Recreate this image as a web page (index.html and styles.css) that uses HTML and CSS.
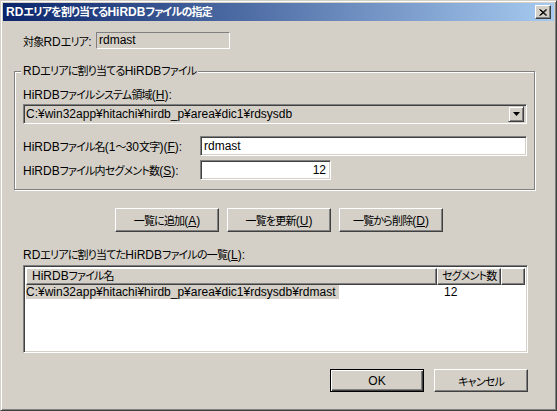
FILE: index.html
```
<!DOCTYPE html>
<html lang="ja">
<head>
<meta charset="utf-8">
<title>RDエリアを割り当てるHiRDBファイルの指定</title>
<link rel="stylesheet" href="styles.css">
</head>
<body>
<div class="window">
  <div class="titlebar">
    <span class="title">RD<span class="j">エリアを割り当てる</span>HiRDB<span class="j">ファイルの指定</span></span>
    <span class="close"><svg width="8" height="7" viewBox="0 0 8 7"><path d="M0.5 0.5 L7 6.5 M1.5 0.5 L8 6.5 M7 0.5 L0.5 6.5 M8 0.5 L1.5 6.5" stroke="#000" stroke-width="1" fill="none"/></svg></span>
  </div>
  <div class="body">
    <div class="target">
      <span class="tlabel"><span class="j">対象</span>RD<span class="j">エリア</span>:</span>
      <span class="static">rdmast</span>
    </div>
    <div class="group">
      <span class="legend">RD<span class="j">エリアに割り当てる</span>HiRDB<span class="j">ファイル</span></span>
      <div class="glabel">HiRDB<span class="j">ファイルシステム領域</span>(<u>H</u>):</div>
      <div class="combo">
        <span class="combo-text">C:¥win32app¥hitachi¥hirdb_p¥area¥dic1¥rdsysdb</span>
        <span class="combo-btn"><svg width="7" height="4" viewBox="0 0 7 4"><path d="M0 0 H7 L3.5 4 Z" fill="#000"/></svg></span>
      </div>
      <div class="field-row first">
        <span class="flabel">HiRDB<span class="j">ファイル名</span>(1<span class="j">〜</span>30<span class="j">文字</span>)(<u>F</u>):</span>
        <span class="edit name">rdmast</span>
      </div>
      <div class="field-row">
        <span class="flabel">HiRDB<span class="j">ファイル内セグメント数</span>(<u>S</u>):</span>
        <span class="edit num">12</span>
      </div>
    </div>
    <div class="btnrow">
      <button class="btn"><span class="j">一覧に追加</span>(<u>A</u>)</button>
      <button class="btn"><span class="j">一覧を更新</span>(<u>U</u>)</button>
      <button class="btn"><span class="j">一覧から削除</span>(<u>D</u>)</button>
    </div>
    <div class="list-label">RD<span class="j">エリアに割り当てた</span>HiRDB<span class="j">ファイルの一覧</span>(<u>L</u>):</div>
    <div class="list">
      <div class="lhead">
        <span class="hc c1">HiRDB<span class="j">ファイル名</span></span>
        <span class="hc c2"><span class="j">セグメント数</span></span>
        <span class="hc c3"></span>
      </div>
      <div class="lrow">
        <span class="rc1"><span class="sel">C:¥win32app¥hitachi¥hirdb_p¥area¥dic1¥rdsysdb¥rdmast</span></span>
        <span class="rc2">12</span>
      </div>
    </div>
    <div class="footer">
      <button class="btn dlg default">OK</button>
      <button class="btn dlg"><span class="j">キャンセル</span></button>
    </div>
  </div>
</div>
</body>
</html>
```

FILE: styles.css
```
* { box-sizing: border-box; }

body {
  margin: 0;
  background: #d4d0c8;
  font-family: "Liberation Sans", "Noto Sans CJK JP", sans-serif;
  font-size: 12px;
  font-feature-settings: "palt";
  color: #000;
}

.j {
  font-size: 11px;
  letter-spacing: -0.8px;
}

.window {
  width: 557px;
  height: 411px;
  background: #d4d0c8;
  border: 1px solid;
  border-color: #d4d0c8 #404040 #404040 #d4d0c8;
  box-shadow: inset 1px 1px #fff, inset -1px -1px #808080;
  padding: 2px;
}

.titlebar {
  height: 18px;
  display: flex;
  align-items: center;
  justify-content: space-between;
  background: linear-gradient(to right, #0a246a, #a6caf0);
  padding: 0 3px 0 3px;
  color: #fff;
  font-weight: bold;
  line-height: 18px;
}

.close {
  width: 16px;
  height: 14px;
  background: #d4d0c8;
  border: 1px solid;
  border-color: #fff #404040 #404040 #fff;
  box-shadow: inset -1px -1px #808080;
  display: flex;
  align-items: center;
  justify-content: center;
}

.body {
  padding-left: 20px;
}

.target {
  display: flex;
  align-items: center;
  margin-top: 11px;
  height: 17px;
}

.tlabel { width: 73px; white-space: nowrap; }

.static {
  width: 134px;
  height: 17px;
  border: 1px solid;
  border-color: #808080 #fff #fff #808080;
  padding-left: 2px;
  line-height: 15px;
}

.group {
  position: relative;
  margin: 22px 0 0 -9px;
  width: 521px;
  height: 119px;
  border: 1px solid #808080;
  box-shadow: 1px 1px 0 #fff, inset 1px 1px 0 #fff;
  padding: 16px 0 0 8px;
}

.legend {
  position: absolute;
  top: -8px;
  left: 6px;
  padding: 0 2px;
  background: #d4d0c8;
  line-height: 14px;
}

.glabel { line-height: 14px; }

.combo {
  margin-top: 2px;
  width: 504px;
  height: 20px;
  display: flex;
  align-items: center;
  justify-content: space-between;
  border: 1px solid;
  border-color: #808080 #fff #fff #808080;
  box-shadow: inset 1px 1px #404040, inset -1px -1px #d4d0c8;
  padding: 2px;
  background: #d4d0c8;
}

.combo-text { line-height: 14px; }

.combo-btn {
  width: 16px;
  height: 16px;
  border: 1px solid;
  border-color: #d4d0c8 #404040 #404040 #d4d0c8;
  box-shadow: inset 1px 1px #fff, inset -1px -1px #808080;
  display: flex;
  align-items: center;
  justify-content: center;
}

.field-row {
  display: flex;
  align-items: center;
  margin-top: 4px;
}

.field-row.first { margin-top: 12px; }

.flabel { width: 177px; white-space: nowrap; }

.edit {
  height: 20px;
  border: 1px solid;
  border-color: #808080 #fff #fff #808080;
  box-shadow: inset 1px 1px #404040, inset -1px -1px #d4d0c8;
  background: #fff;
  line-height: 18px;
}

.edit.name { width: 327px; padding-left: 3px; }
.edit.num { width: 131px; text-align: right; padding-right: 4px; }

.btnrow {
  display: flex;
  gap: 8px;
  margin-top: 18px;
  padding-left: 92px;
}

.btn {
  font: inherit;
  color: #000;
  background: #d4d0c8;
  border: 1px solid;
  border-color: #fff #404040 #404040 #fff;
  box-shadow: inset -1px -1px #808080;
  width: 104px;
  height: 24px;
  padding: 0;
  margin: 0;
  white-space: nowrap;
}

.list-label {
  margin-top: 16px;
  line-height: 14px;
}

.list {
  margin-top: 3px;
  width: 505px;
  height: 88px;
  border: 1px solid;
  border-color: #808080 #fff #fff #808080;
  box-shadow: inset 1px 1px #404040, inset -1px -1px #d4d0c8;
  background: #fff;
  padding: 2px;
}

.lhead {
  display: flex;
  height: 17px;
}

.hc {
  height: 17px;
  line-height: 15px;
  background: #d4d0c8;
  border: 1px solid;
  border-color: #fff #404040 #404040 #fff;
  box-shadow: inset -1px -1px #808080;
  white-space: nowrap;
  overflow: hidden;
}

.hc.c1 { width: 411px; padding-left: 5px; }
.hc.c2 { width: 64px; padding-left: 4px; }
.hc.c3 { flex: 1; }

.lrow {
  display: flex;
  height: 14px;
  line-height: 14px;
}

.rc1 { width: 411px; white-space: nowrap; }
.sel { background: #d4d0c8; padding-right: 3px; }
.rc2 { padding-left: 7px; }

.footer {
  display: flex;
  gap: 10px;
  margin-top: 16px;
  padding-left: 307px;
}

.btn.dlg {
  width: 94px;
  height: 23px;
}

.btn.default {
  border: 1px solid #000;
  box-shadow: inset 1px 1px #fff, inset -1px -1px #404040, inset -2px -2px #808080;
}
```
